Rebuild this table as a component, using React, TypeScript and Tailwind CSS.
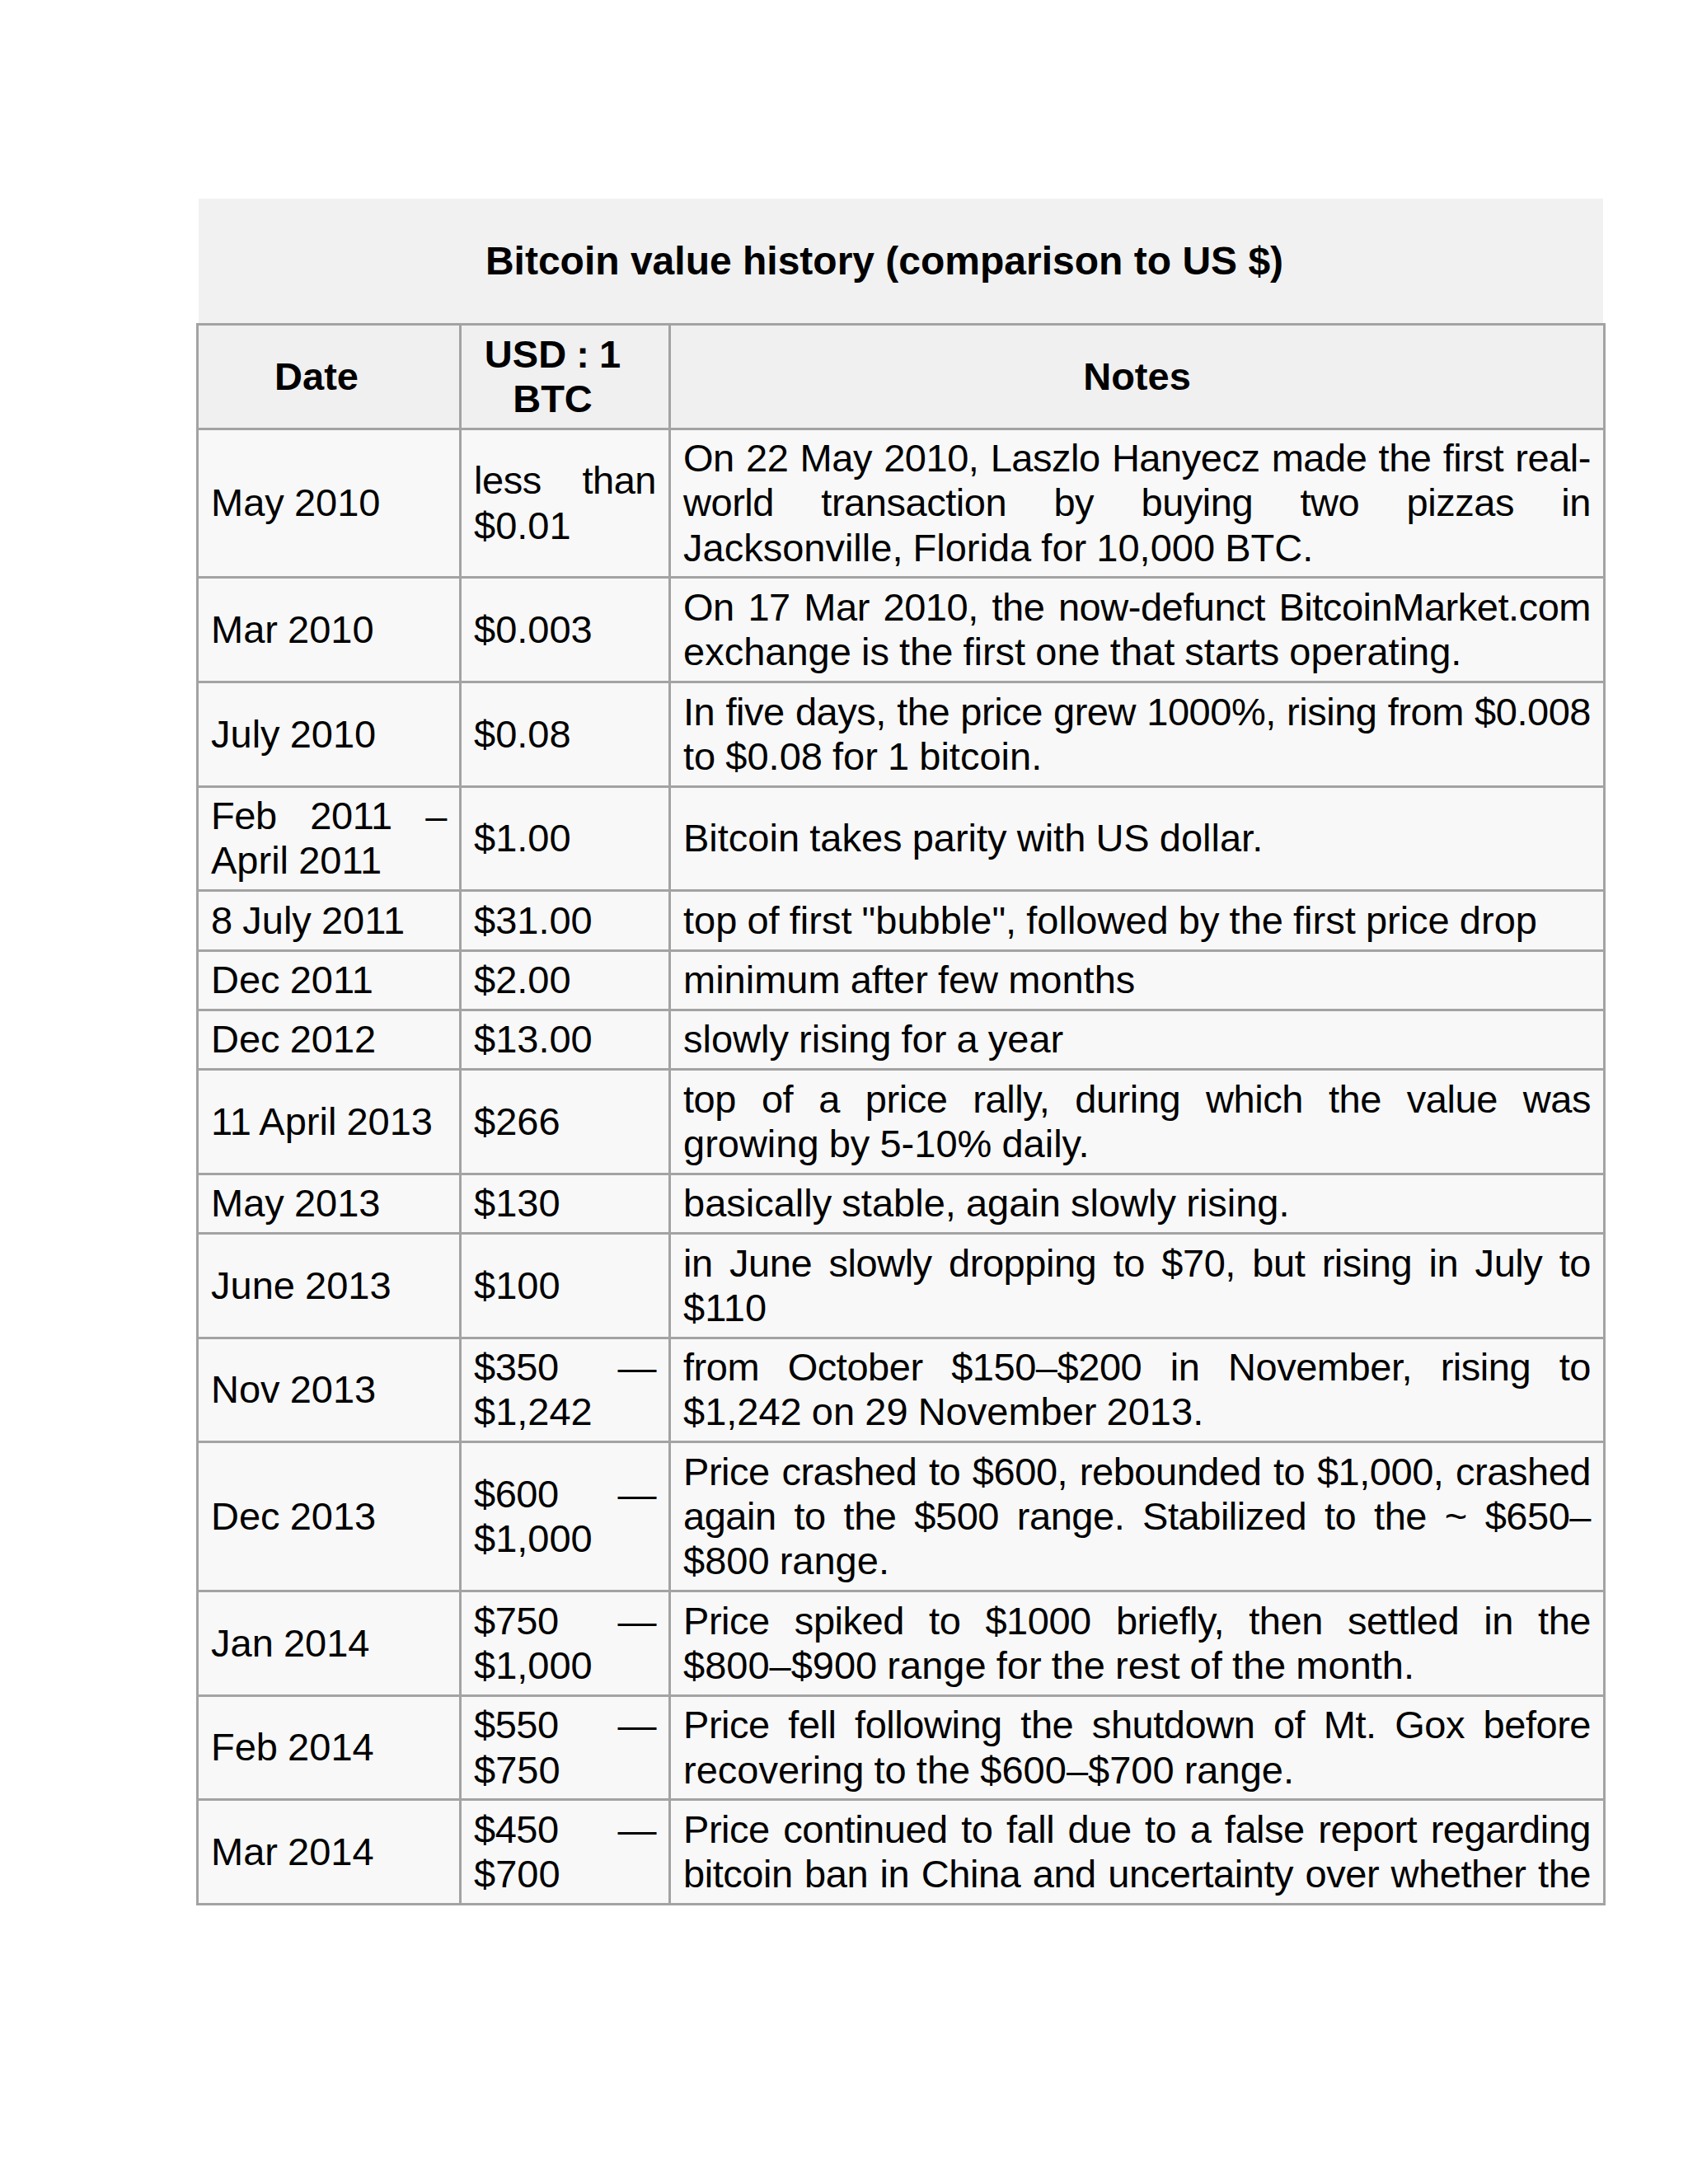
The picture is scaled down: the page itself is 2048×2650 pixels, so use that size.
import React from 'react';

type Row = { date: string[]; usd: string[]; notes: string[] };

const rows: Row[] = [
  {
    date: ['May 2010'],
    usd: ['less than', '$0.01'],
    notes: [
      'On 22 May 2010, Laszlo Hanyecz made the first real-',
      'world transaction by buying two pizzas in',
      'Jacksonville, Florida for 10,000 BTC.',
    ],
  },
  {
    date: ['Mar 2010'],
    usd: ['$0.003'],
    notes: ['On 17 Mar 2010, the now-defunct BitcoinMarket.com', 'exchange is the first one that starts operating.'],
  },
  {
    date: ['July 2010'],
    usd: ['$0.08'],
    notes: ['In five days, the price grew 1000%, rising from $0.008', 'to $0.08 for 1 bitcoin.'],
  },
  { date: ['Feb 2011 –', 'April 2011'], usd: ['$1.00'], notes: ['Bitcoin takes parity with US dollar.'] },
  { date: ['8 July 2011'], usd: ['$31.00'], notes: ['top of first "bubble", followed by the first price drop'] },
  { date: ['Dec 2011'], usd: ['$2.00'], notes: ['minimum after few months'] },
  { date: ['Dec 2012'], usd: ['$13.00'], notes: ['slowly rising for a year'] },
  {
    date: ['11 April 2013'],
    usd: ['$266'],
    notes: ['top of a price rally, during which the value was', 'growing by 5-10% daily.'],
  },
  { date: ['May 2013'], usd: ['$130'], notes: ['basically stable, again slowly rising.'] },
  {
    date: ['June 2013'],
    usd: ['$100'],
    notes: ['in June slowly dropping to $70, but rising in July to', '$110'],
  },
  {
    date: ['Nov 2013'],
    usd: ['$350 —', '$1,242'],
    notes: ['from October $150–$200 in November, rising to', '$1,242 on 29 November 2013.'],
  },
  {
    date: ['Dec 2013'],
    usd: ['$600 —', '$1,000'],
    notes: [
      'Price crashed to $600, rebounded to $1,000, crashed',
      'again to the $500 range. Stabilized to the ~ $650–',
      '$800 range.',
    ],
  },
  {
    date: ['Jan 2014'],
    usd: ['$750 —', '$1,000'],
    notes: ['Price spiked to $1000 briefly, then settled in the', '$800–$900 range for the rest of the month.'],
  },
  {
    date: ['Feb 2014'],
    usd: ['$550 —', '$750'],
    notes: ['Price fell following the shutdown of Mt. Gox before', 'recovering to the $600–$700 range.'],
  },
  {
    date: ['Mar 2014'],
    usd: ['$450 —', '$700'],
    notes: ['Price continued to fall due to a false report regarding', 'bitcoin ban in China and uncertainty over whether the'],
  },
];

// each line but the last is stretched to the cell width, like justified text.
// stretched lines get a hair of negative tracking so the longest ones still fit
const Lines: React.FC<{ lines: string[]; fullLast?: boolean }> = ({ lines, fullLast }) => (
  <>
    {lines.map((line, i) => {
      const last = i === lines.length - 1 && !fullLast;
      return (
        <div
          key={i}
          className={
            last
              ? 'whitespace-nowrap text-left'
              : 'whitespace-nowrap text-justify tracking-[-0.01em] [text-align-last:justify]'
          }
        >
          {line}
        </div>
      );
    })}
  </>
);

const cell = 'border-[3px] border-[#a3a3a3] px-[15px] py-[7.5px] align-middle';

export default function App() {
  return (
    <div className="min-h-[2650px] w-[2048px] bg-white pt-[241px] pl-[238px] font-['Liberation_Sans',Arial,sans-serif] text-black">
      <div className="w-[1707px]">
        {/* caption */}
        <div className="ml-[3px] flex h-[151px] w-[1704px] items-center justify-center bg-[#f1f1f1] pr-[40px] text-[48px] font-bold leading-[56px]">
          Bitcoin value history (comparison to US $)
        </div>
        <table className="w-[1707px] table-fixed border-collapse border-[3px] border-[#a3a3a3] text-[47px] leading-[54.3px] [word-spacing:-0.02em]">
          <colgroup>
            <col className="w-[319px]" />
            <col className="w-[254px]" />
            <col className="w-[1134px]" />
          </colgroup>
          <thead>
            <tr className="bg-[#f0f0f0] font-bold">
              <th className={`${cell} pr-[45px] text-center`}>Date</th>
              <th className={`${cell} pr-[45px] text-center`}>
                <div>USD : 1</div>
                <div>BTC</div>
              </th>
              <th className={`${cell} text-center`}>Notes</th>
            </tr>
          </thead>
          <tbody>
            {rows.map((r, i) => (
              <tr key={i} className="bg-[#f8f8f8]">
                <td className={cell}>
                  <Lines lines={r.date} />
                </td>
                <td className={cell}>
                  <Lines lines={r.usd} />
                </td>
                <td className={cell}>
                  <Lines lines={r.notes} fullLast={i === rows.length - 1} />
                </td>
              </tr>
            ))}
          </tbody>
        </table>
      </div>
    </div>
  );
}
